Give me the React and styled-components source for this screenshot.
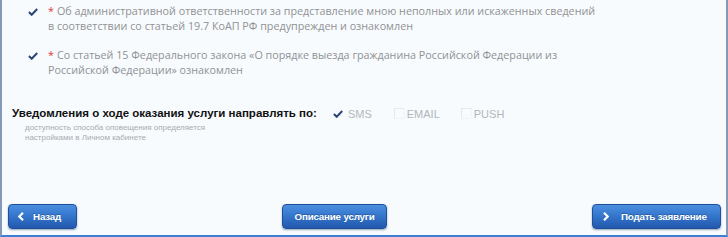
import React from "react";
import styled, { createGlobalStyle } from "styled-components";

const Global = createGlobalStyle`
  html, body { margin: 0; padding: 0; background: #f7fbfe; }
  * { box-sizing: border-box; }
`;

const Frame = styled.div`
  width: 728px;
  height: 237px;
  background: #f7fbfe;
  border-left: 2px solid #8499ba;
  border-right: 2px solid #8499ba;
  border-bottom: 2px solid #3b7fd6;
  display: flex;
  flex-direction: column;
  font-family: "Open Sans", "Liberation Sans", sans-serif;
`;

const Agreements = styled.div`
  display: flex;
  flex-direction: column;
  gap: 14px;
  padding: 4px 0 0 26px;
`;

const AgreeRow = styled.div`
  display: flex;
  align-items: flex-start;
  gap: 10px;
`;

const CheckBox = styled.span`
  flex: none;
  width: 10px;
  height: 15px;
  display: flex;
  align-items: center;
  justify-content: center;
`;

const AgreeText = styled.div`
  font-size: 10.75px;
  line-height: 15px;
  color: #909294;
  white-space: nowrap;
`;

const Star = styled.span`
  color: #e0393e;
  margin-right: 3px;
`;

const NotifyRow = styled.div`
  display: flex;
  align-items: flex-start;
  margin-top: 28px;
  padding-left: 10px;
`;

const NotifyLabel = styled.div`
  display: flex;
  flex-direction: column;
`;

const Title = styled.div`
  font-family: "Liberation Sans", Arial, sans-serif;
  font-weight: bold;
  font-size: 11.5px;
  line-height: 15px;
  color: #111;
  white-space: nowrap;
`;

const Hint = styled.div`
  font-family: "Liberation Sans", Arial, sans-serif;
  font-size: 8px;
  line-height: 10px;
  color: #a8abae;
  padding-left: 13px;
  margin-top: 2px;
  white-space: nowrap;
`;

const Options = styled.div`
  display: flex;
  align-items: center;
  margin-left: 16px;
  height: 15px;
`;

const Option = styled.label`
  display: flex;
  align-items: center;
  gap: ${(p) => (p.$checked ? "5px" : "2px")};
  margin-right: ${(p) => p.$gap}px;
  font-family: "Liberation Sans", Arial, sans-serif;
  font-size: 11px;
  color: #b3b6b9;
`;

const EmptyBox = styled.span`
  width: 11px;
  height: 11px;
  border-top: 1px solid #e3e9ee;
  border-left: 1px solid #e3e9ee;
  border-bottom: 1px solid #f0f4f7;
  border-right: 1px solid #f0f4f7;
`;

const ButtonBar = styled.div`
  margin-top: auto;
  display: flex;
  justify-content: space-between;
  align-items: center;
  padding: 0 5px 6px 6px;
`;

const Button = styled.button`
  height: 25px;
  width: ${(p) => p.$w}px;
  border: 1px solid #1f4f98;
  border-radius: 4px;
  background: linear-gradient(#4c8fe0 0%, #3577cd 45%, #2258ad 100%);
  box-shadow: 0 1px 2px rgba(20, 50, 100, 0.45);
  color: #fff;
  font-family: "Liberation Sans", Arial, sans-serif;
  font-weight: bold;
  font-size: 9.8px;
  letter-spacing: -0.2px;
  white-space: nowrap;
  display: flex;
  align-items: center;
  justify-content: ${(p) => (p.$center ? "center" : "flex-start")};
  gap: ${(p) => p.$gap || 0}px;
  padding: 0 0 0 ${(p) => p.$pad || 0}px;
  cursor: pointer;
  text-shadow: 0 -1px 0 rgba(0, 0, 0, 0.25);
`;

const Check = () => (
  <svg width="10" height="8" viewBox="0 0 10 8">
    <path d="M0.9 4 L3.7 6.8 L9.2 1" fill="none" stroke="#2a4677" strokeWidth="2" />
  </svg>
);

const Chevron = ({ dir }) => (
  <svg width="6" height="9" viewBox="0 0 6 9">
    <path
      d={dir === "left" ? "M5 0.8 L1.3 4.5 L5 8.2" : "M1 0.8 L4.7 4.5 L1 8.2"}
      fill="none"
      stroke="#fff"
      strokeWidth="2.2"
    />
  </svg>
);

export default function App() {
  return (
    <>
      <Global />
      <Frame>
        <Agreements>
          <AgreeRow>
            <CheckBox><Check /></CheckBox>
            <AgreeText>
              <Star>*</Star>Об административной ответственности за представление мною неполных или искаженных сведений
              <br />в соответствии со статьей 19.7 КоАП РФ предупрежден и ознакомлен
            </AgreeText>
          </AgreeRow>
          <AgreeRow>
            <CheckBox><Check /></CheckBox>
            <AgreeText>
              <Star>*</Star>Со статьей 15 Федерального закона «О порядке выезда гражданина Российской Федерации из
              <br />Российской Федерации» ознакомлен
            </AgreeText>
          </AgreeRow>
        </Agreements>
        <NotifyRow>
          <NotifyLabel>
            <Title>Уведомления о ходе оказания услуги направлять по:</Title>
            <Hint>
              доступность способа оповещения определяется
              <br />
              настройками в Личном кабинете
            </Hint>
          </NotifyLabel>
          <Options>
            <Option $checked $gap={22}><Check />SMS</Option>
            <Option $gap={21}><EmptyBox />EMAIL</Option>
            <Option $gap={0}><EmptyBox />PUSH</Option>
          </Options>
        </NotifyRow>
        <ButtonBar>
          <Button $w={69} $pad={9} $gap={9}><Chevron dir="left" />Назад</Button>
          <Button $w={105} $center>Описание услуги</Button>
          <Button $w={129} $pad={10} $gap={12}><Chevron dir="right" />Подать заявление</Button>
        </ButtonBar>
      </Frame>
    </>
  );
}
